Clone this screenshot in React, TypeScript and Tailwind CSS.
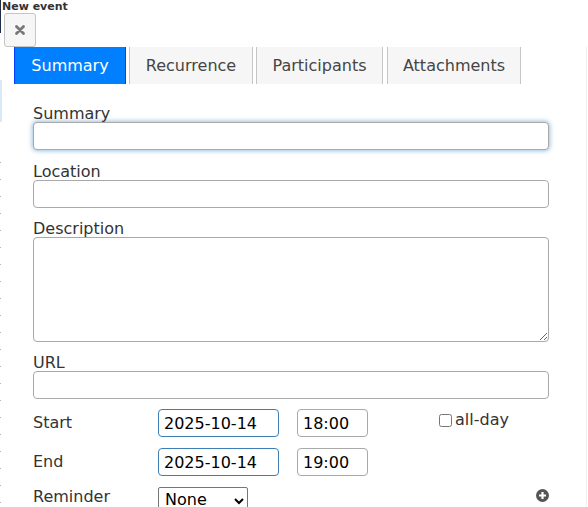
import { useState } from 'react';

const tabs = [
  { name: 'Summary', cls: 'w-[112px]' },
  { name: 'Recurrence', cls: 'ml-[3px] w-[124px]' },
  { name: 'Participants', cls: 'ml-[3px] w-[127px]' },
  { name: 'Attachments', cls: 'ml-[4px] w-[134px]' }
];

function Field({ label, gap = 'mt-[14px]', children }: { label: string; gap?: string; children: React.ReactNode }): JSX.Element {
  return (
    <div>
      <label className={gap + ' block text-[16px] leading-4 text-[#333]'}>{label}</label>
      {children}
    </div>
  );
}

export default function App(): JSX.Element {
  const [active, setActive] = useState(0);
  const inputClass =
    'block h-[28px] w-[516px] rounded-[4px] border border-[#a9a9a9] bg-white px-[5px] text-[16px] text-black outline-none';

  return (
    <div className="relative h-[507px] w-[588px] overflow-hidden bg-white font-['DejaVu_Sans',sans-serif] text-[#333]">
      {/* page behind the dialog */}
      <div className="absolute left-0 top-0 h-[33px] w-px bg-[#1c2b4a]" />
      <div className="absolute left-0 top-[80px] h-[42px] w-[2px] bg-[#d9eaf6]" />
      <div className="absolute left-0 top-[162px] bottom-0 w-px bg-[repeating-linear-gradient(to_bottom,#b5b5b5_0,#b5b5b5_1px,transparent_1px,transparent_17px)]" />
      <div className="absolute right-[1px] top-[47px] bottom-0 w-px bg-[#eeeeee]" />

      <div className="pl-[2px] pt-px text-[11px] font-bold leading-[12px] text-[#333]">New event</div>
      <button
        type="button"
        className="ml-[4px] flex h-[34px] w-[32px] items-center justify-center rounded-[3px] border border-[#c5c5c5] bg-[#f6f6f6]"
        aria-label="Close"
      >
        <svg width="10" height="10" viewBox="0 0 10 10">
          <path d="M1.5 1.5 L8.5 8.5 M8.5 1.5 L1.5 8.5" stroke="#777" strokeWidth="2.8" strokeLinecap="round" />
        </svg>
      </button>

      <div className="flex pl-[14px]">
        {tabs.map((tab, i) => (
          <button
            key={tab.name}
            type="button"
            onClick={() => setActive(i)}
            className={
              i === active
                ? tab.cls + ' flex h-[37px] items-center justify-center border-x border-[#003eff] bg-[#007fff] text-[16px] text-white'
                : tab.cls + ' flex h-[37px] items-center justify-center border-x border-[#c5c5c5] bg-[#f6f6f6] text-[16px] text-[#454545]'
            }
          >
            {tab.name}
          </button>
        ))}
      </div>

      <div className="pl-[33px] pt-[8px]">
        <Field label="Summary">
          <input
            className={inputClass + ' border-[#3f7fb5] shadow-[0_0_4px_1px_rgba(70,140,205,0.55)]'}
            autoFocus
          />
        </Field>
        <Field label="Location">
          <input className={inputClass} />
        </Field>
        <Field label="Description" gap="mt-[13px]">
          <textarea className="block h-[105px] w-[516px] rounded-[4px] border border-[#a9a9a9] bg-white px-[5px] text-[16px] text-black outline-none" />
        </Field>
        <Field label="URL" gap="mt-[13px]">
          <input className={inputClass} />
        </Field>

        <div className="mt-[10px] flex h-[28px] items-center">
          <span className="w-[125px] text-[16px] leading-4">Start</span>
          <input
            defaultValue="2025-10-14"
            className="h-[28px] w-[121px] rounded-[4px] border border-[#3d7fb5] px-[5px] text-[16px] text-black outline-none"
          />
          <input
            defaultValue="18:00"
            className="ml-[18px] h-[28px] w-[71px] rounded-[4px] border border-[#a9a9a9] px-[5px] text-[16px] text-black outline-none"
          />
          <label className="ml-[71px] flex self-start pt-[2px] text-[16px] leading-[18px]">
            <input type="checkbox" className="mr-[3px] mt-[3px] h-[13px] w-[13px]" />
            all-day
          </label>
        </div>

        <div className="mt-[11px] flex h-[28px] items-center">
          <span className="w-[125px] text-[16px] leading-4">End</span>
          <input
            defaultValue="2025-10-14"
            className="h-[28px] w-[121px] rounded-[4px] border border-[#3d7fb5] px-[5px] text-[16px] text-black outline-none"
          />
          <input
            defaultValue="19:00"
            className="ml-[18px] h-[28px] w-[71px] rounded-[4px] border border-[#a9a9a9] px-[5px] text-[16px] text-black outline-none"
          />
        </div>

        <div className="mt-[11px] flex h-[28px] w-[516px] items-start">
          <span className="w-[125px] pt-[2px] text-[16px] leading-4">Reminder</span>
          <select className="h-[28px] w-[90px] rounded-[2px] border border-[#767676] bg-white pb-[4px] pl-[2px] text-[16px] leading-5 text-black">
            <option>None</option>
          </select>
          <span className="ml-auto mt-[2px] flex h-[13px] w-[13px] items-center justify-center rounded-full bg-[#555]">
            <svg width="9" height="9" viewBox="0 0 9 9">
              <path d="M4.5 1 V8 M1 4.5 H8" stroke="#fff" strokeWidth="2.2" />
            </svg>
          </span>
        </div>
      </div>
    </div>
  );
}
